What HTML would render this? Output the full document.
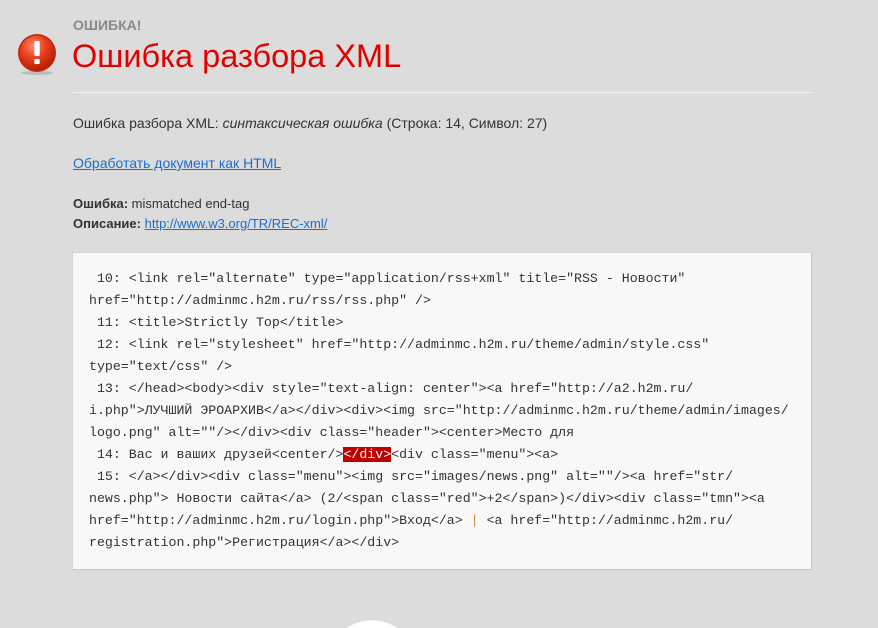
<!DOCTYPE html>
<html><head><meta charset="utf-8"><style>
html,body{margin:0;padding:0;background:#dcdcdc;width:878px;height:628px;overflow:hidden;font-family:"Liberation Sans",Arial,sans-serif;}
#w{position:relative;width:878px;height:628px;overflow:hidden;}
.icon{position:absolute;left:16px;top:33px;width:42px;height:42px;}
.small{position:absolute;left:73px;top:17px;font-size:14px;font-weight:bold;color:#8a8a8a;}
h1{position:absolute;left:72px;top:35px;margin:0;font-size:32.5px;font-weight:normal;color:#e00000;line-height:42px;}
.hr{position:absolute;left:73px;top:92px;width:740px;height:1px;background:#f4f4f4;}
.t{position:absolute;left:73px;font-size:14px;color:#333;white-space:nowrap;}
a{color:#1a6fd0;}
.s{font-size:13px;}
.box{position:absolute;left:73px;top:253px;width:738px;height:316px;background:#f8f8f8;border-right:1px solid #ccc;border-bottom:1px solid #ccc;box-shadow:0 0 0 1px #d6d6d6;}
pre{position:absolute;left:89px;top:268px;margin:0;font-family:"Liberation Mono","DejaVu Sans Mono",monospace;font-size:13.25px;line-height:22px;color:#333;}
.hl{background:#c00000;color:#fff;}
.circ{position:absolute;left:327px;top:618px;width:90px;height:10px;background:radial-gradient(circle 45px at 45px 47px,#fff 44.5px,rgba(255,255,255,0) 45px);}
</style></head><body><div id="w">
<svg class="icon" viewBox="0 0 42 42"><defs><radialGradient id="g" cx="40%" cy="30%" r="70%"><stop offset="0" stop-color="#ff8a6a"/><stop offset="0.5" stop-color="#e8401c"/><stop offset="1" stop-color="#b81e08"/></radialGradient></defs><ellipse cx="21" cy="40" rx="16" ry="2" fill="#bbb"/><circle cx="21" cy="20" r="19" fill="#c02810"/><circle cx="21" cy="20" r="17.5" fill="url(#g)"/><rect x="18.3" y="8" width="5.4" height="15" rx="1" fill="#fff"/><rect x="18.3" y="26" width="5.4" height="5" rx="1" fill="#fff"/></svg>
<div class="small">ОШИБКА!</div>
<h1>Ошибка разбора XML</h1>
<div class="hr"></div>
<div class="t" style="top:115px">Ошибка разбора XML: <i>синтаксическая ошибка</i> (Строка: 14, Символ: 27)</div>
<div class="t" style="top:155px"><a href="#">Обработать документ как HTML</a></div>
<div class="t s" style="top:196px"><b>Ошибка:</b> mismatched end-tag</div>
<div class="t s" style="top:216px"><b>Описание:</b> <a href="#">http://www.w3.org/TR/REC-xml/</a></div>
<div class="box"></div>
<pre> 10: &lt;link rel="alternate" type="application/rss+xml" title="RSS - Новости"
href="http://adminmc.h2m.ru/rss/rss.php" /&gt;
 11: &lt;title&gt;Strictly Top&lt;/title&gt;
 12: &lt;link rel="stylesheet" href="http://adminmc.h2m.ru/theme/admin/style.css"
type="text/css" /&gt;
 13: &lt;/head&gt;&lt;body&gt;&lt;div style="text-align: center"&gt;&lt;a href="http://a2.h2m.ru/
i.php"&gt;ЛУЧШИЙ ЭРОАРХИВ&lt;/a&gt;&lt;/div&gt;&lt;div&gt;&lt;img src="http://adminmc.h2m.ru/theme/admin/images/
logo.png" alt=""/&gt;&lt;/div&gt;&lt;div class="header"&gt;&lt;center&gt;Место для
 14: Вас и ваших друзей&lt;center/&gt;<span class="hl">&lt;/div&gt;</span>&lt;div class="menu"&gt;&lt;a&gt;
 15: &lt;/a&gt;&lt;/div&gt;&lt;div class="menu"&gt;&lt;img src="images/news.png" alt=""/&gt;&lt;a href="str/
news.php"&gt; Новости сайта&lt;/a&gt; (2/&lt;span class="red"&gt;+2&lt;/span&gt;)&lt;/div&gt;&lt;div class="tmn"&gt;&lt;a
href="http://adminmc.h2m.ru/login.php"&gt;Вход&lt;/a&gt; <span style="color:#d08a30">|</span> &lt;a href="http://adminmc.h2m.ru/
registration.php"&gt;Регистрация&lt;/a&gt;&lt;/div&gt;</pre>
<div class="circ"></div>
</div></body></html>
